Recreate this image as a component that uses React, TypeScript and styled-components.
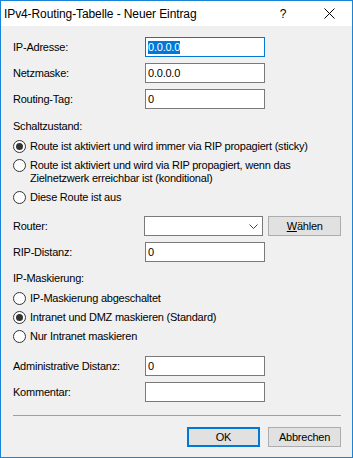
import React from 'react'
import styled, { createGlobalStyle } from 'styled-components'

const GlobalStyle = createGlobalStyle`
  html, body {
    margin: 0;
    padding: 0;
    background: #f0f0f0;
  }
  * {
    box-sizing: border-box;
  }
`

// Window frame
const Window = styled.div`
  width: 353px;
  height: 458px;
  border: 1px solid #1883d7;
  background: #f0f0f0;
  display: flex;
  flex-direction: column;
  font-family: 'Liberation Sans', Arial, sans-serif;
  font-size: 11px;
  letter-spacing: -0.22px;
  color: #000;
`

const TitleBar = styled.div`
  height: 25px;
  background: #fff;
  display: flex;
  align-items: center;
`

const Title = styled.div`
  flex: 1;
  padding-left: 3px;
  font-size: 12px;
  letter-spacing: -0.1px;
`

const CaptionButton = styled.div`
  width: 46px;
  height: 25px;
  display: flex;
  align-items: center;
  justify-content: center;
  font-size: 12px;
  letter-spacing: 0;
`

const Body = styled.div`
  flex: 1;
  padding: 11px 11px 10px 12px;
  display: flex;
  flex-direction: column;
`

const Row = styled.div<{ $gap?: number }>`
  display: flex;
  align-items: center;
  height: 20px;
  margin-top: ${(p) => p.$gap ?? 6}px;
`

const Label = styled.div`
  width: 132px;
`

const TextBox = styled.div<{ $focused?: boolean }>`
  width: 120px;
  height: 20px;
  background: #fff;
  border: 1px solid ${(p) => (p.$focused ? '#0078d7' : '#7a7a7a')};
  padding-left: 2px;
  display: flex;
  align-items: center;
  white-space: nowrap;
`

const Selected = styled.span`
  background: #0078d7;
  color: #fff;
  line-height: 13px;
`

const Combo = styled(TextBox)`
  justify-content: flex-end;
  padding-right: 4px;
`

const GroupHeading = styled.div<{ $gap: number }>`
  line-height: 13px;
  margin-top: ${(p) => p.$gap}px;
`

const RadioList = styled.div`
  margin-top: 4px;
  display: flex;
  flex-direction: column;
`

const RadioRow = styled.div`
  display: flex;
  align-items: flex-start;
  padding: 3px 0;
  line-height: 13px;
`

const RadioCircle = styled.span<{ $checked?: boolean }>`
  flex: none;
  width: 13px;
  height: 13px;
  border-radius: 50%;
  border: 1px solid #333;
  background: #fff;
  margin-right: 4px;
  display: flex;
  align-items: center;
  justify-content: center;
  &::after {
    content: '';
    width: 7px;
    height: 7px;
    border-radius: 50%;
    background: ${(p) => (p.$checked ? '#333' : 'transparent')};
  }
`

const Button = styled.div<{ $default?: boolean }>`
  width: 73px;
  height: 20px;
  background: #e1e1e1;
  border: ${(p) => (p.$default ? '2px solid #0078d7' : '1px solid #adadad')};
  display: flex;
  align-items: center;
  justify-content: center;
`

const SideButton = styled(Button)`
  margin-left: 5px;
`

const Separator = styled.div`
  margin-top: 13px;
  height: 1px;
  background: #a0a0a0;
`

const ButtonBar = styled.div`
  margin-top: 11px;
  display: flex;
  justify-content: flex-end;
  gap: 8px;
`

const Radio = ({ checked, children }: { checked?: boolean; children: React.ReactNode }) => (
  <RadioRow>
    <RadioCircle $checked={checked} />
    <span>{children}</span>
  </RadioRow>
)

const App = () => {
  return (
    <>
      <GlobalStyle />
      <Window>
        <TitleBar>
          <Title>IPv4-Routing-Tabelle - Neuer Eintrag</Title>
          <CaptionButton>?</CaptionButton>
          <CaptionButton>
            <svg width="11" height="11" viewBox="0 0 11 11">
              <path d="M0.5 0.5 L10.5 10.5 M10.5 0.5 L0.5 10.5" stroke="#000" strokeWidth="1" />
            </svg>
          </CaptionButton>
        </TitleBar>
        <Body>
          <Row $gap={0}>
            <Label>IP-Adresse:</Label>
            <TextBox $focused>
              <Selected>0.0.0.0</Selected>
            </TextBox>
          </Row>
          <Row>
            <Label>Netzmaske:</Label>
            <TextBox>0.0.0.0</TextBox>
          </Row>
          <Row>
            <Label>Routing-Tag:</Label>
            <TextBox>0</TextBox>
          </Row>

          <GroupHeading $gap={11}>Schaltzustand:</GroupHeading>
          <RadioList>
            <Radio checked>Route ist aktiviert und wird immer via RIP propagiert (sticky)</Radio>
            <Radio>
              Route ist aktiviert und wird via RIP propagiert, wenn das
              <br />
              Zielnetzwerk erreichbar ist (konditional)
            </Radio>
            <Radio>Diese Route ist aus</Radio>
          </RadioList>

          <Row $gap={9}>
            <Label>Router:</Label>
            <Combo>
              <svg width="9" height="5" viewBox="0 0 9 5">
                <path d="M0.5 0.5 L4.5 4.5 L8.5 0.5" stroke="#444" strokeWidth="1" fill="none" />
              </svg>
            </Combo>
            <SideButton>
              <span>
                <u>W</u>ählen
              </span>
            </SideButton>
          </Row>
          <Row>
            <Label>RIP-Distanz:</Label>
            <TextBox>0</TextBox>
          </Row>

          <GroupHeading $gap={10}>IP-Maskierung:</GroupHeading>
          <RadioList>
            <Radio>IP-Maskierung abgeschaltet</Radio>
            <Radio checked>Intranet und DMZ maskieren (Standard)</Radio>
            <Radio>Nur Intranet maskieren</Radio>
          </RadioList>

          <Row $gap={10}>
            <Label>Administrative Distanz:</Label>
            <TextBox>0</TextBox>
          </Row>
          <Row>
            <Label>Kommentar:</Label>
            <TextBox />
          </Row>

          <Separator />
          <ButtonBar>
            <Button $default>OK</Button>
            <Button>Abbrechen</Button>
          </ButtonBar>
        </Body>
      </Window>
    </>
  )
}

export default App
